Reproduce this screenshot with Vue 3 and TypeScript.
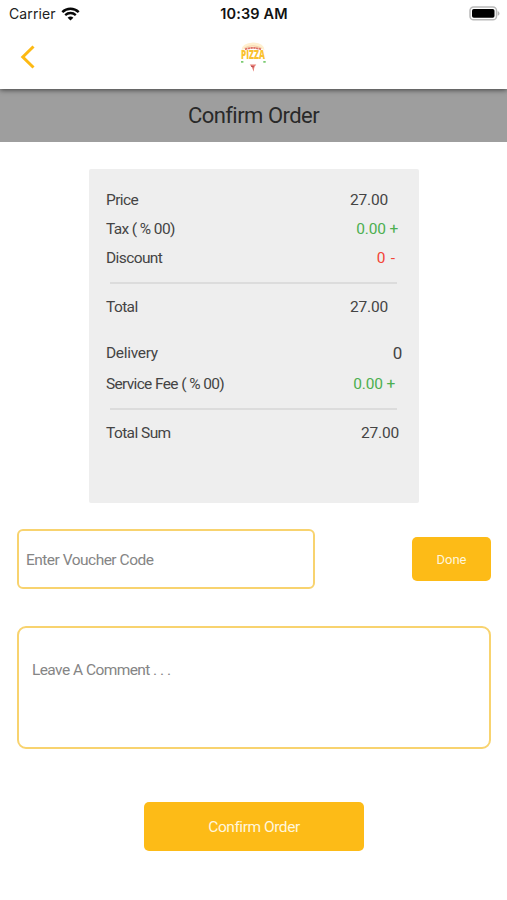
<script setup lang="ts">
interface Line {
  key: string
  label: string
  value: string
  tone?: 'plus' | 'minus'
}

const subtotal: Line[] = [
  { key: 'price', label: 'Price', value: '27.00' },
  { key: 'tax', label: 'Tax ( % 00)', value: '0.00 +', tone: 'plus' },
  { key: 'discount', label: 'Discount', value: '0 -', tone: 'minus' },
]
const fees: Line[] = [
  { key: 'total', label: 'Total', value: '27.00' },
  { key: 'delivery', label: 'Delivery', value: '0' },
  { key: 'service', label: 'Service Fee ( % 00)', value: '0.00 +', tone: 'plus' },
]
const sum: Line[] = [{ key: 'sum', label: 'Total Sum', value: '27.00' }]
const groups: Line[][] = [subtotal, fees, sum]
</script>

<template>
  <main class="screen">
    <header class="top">
      <div class="status">
        <div class="carrier">
          <span>Carrier</span>
          <svg class="wifi" width="19" height="14" viewBox="0 0 19 14">
            <path d="M1.3 5.1C6 .6 13 .6 17.7 5.1" fill="none" stroke="#080808" stroke-width="2.5" />
            <path d="M4.2 8.1c3-2.8 7.6-2.8 10.6 0" fill="none" stroke="#080808" stroke-width="2.3" />
            <path d="M6.6 10.7c1.7-1.6 4.1-1.6 5.8 0L9.5 13.6z" fill="#080808" />
          </svg>
        </div>
        <span class="time">10:39 AM</span>
        <svg class="battery" width="31" height="15" viewBox="0 0 31 15">
          <rect x="1" y="1" width="26.5" height="12.8" rx="3.6" fill="#fff" stroke="#b9b9b9" stroke-width="1.5" />
          <rect x="3" y="3" width="22.5" height="8.8" rx="1.8" fill="#000" />
          <path d="M28.7 5v4.8q1.8-.7 1.8-2.4T28.7 5z" fill="#b5b5b5" />
        </svg>
      </div>
      <nav class="nav">
        <svg class="back" width="16" height="26" viewBox="0 0 16 26">
          <path d="M14.500 2.500 3.800 13 14.500 23.500" fill="none" stroke="#fdb913" stroke-width="3" />
        </svg>
        <svg class="logo" width="36" height="34" viewBox="-4 0 36 34">
          <path d="M2.500 10Q3 3 14 2.500 25 3 25.500 10 14 5 2.500 10z" fill="#fff0d0" />
          <path d="M5.500 8Q14 3.500 22.500 8" fill="none" stroke="#f6d5ae" stroke-width="1.2" />
          <path d="M6 9.300Q14 6.400 22 9.300" fill="none" stroke="#df7468" stroke-width="1.800" stroke-dasharray="2.4 .4" />
          <text x="2" y="19.200" textLength="24" lengthAdjust="spacingAndGlyphs" class="logo-word">PIZZA</text>
          <path d="M2 21.800h2.400M24.300 21.800h2.400" stroke="#7bcb72" stroke-width="1.800" />
          <path d="M10.700 24.400h6.600l-2 2.600-.6 4.800-1.800-4.600z" fill="#e78078" />
          <path d="m12 26.200 3.200.8" stroke="#b94a50" stroke-width="1" />
        </svg>
      </nav>
    </header>

    <h1 class="title"><span>Confirm Order</span></h1>

    <section class="card">
      <div v-for="(group, i) in groups" :key="i" class="group">
        <div v-for="line in group" :key="line.key" :class="['row', line.key]">
          <span class="label">{{ line.label }}</span>
          <span :class="['value', line.tone]">{{ line.value }}</span>
        </div>
      </div>
    </section>

    <section class="voucher">
      <div class="field"><span>Enter Voucher Code</span></div>
      <button class="done" type="button">Done</button>
    </section>

    <div class="comment"><span>Leave A Comment . . .</span></div>

    <button class="confirm" type="button"><span>Confirm Order</span></button>
  </main>
</template>

<style>
body {
  background: #fff;
}
</style>

<style scoped>
.screen {
  box-sizing: border-box;
  width: 507px;
  height: 900px;
  display: flex;
  flex-direction: column;
  overflow: hidden;
  background: #fff;
  color: #444;
  font-family: Roboto, 'Noto Sans', sans-serif;
  font-size: 15.5px;
  letter-spacing: -0.6px;
  word-spacing: 0.2px;
}
.top {
  position: relative;
  height: 89px;
  flex: none;
  background: #fff;
  box-shadow: 0 1px 5px rgba(0, 0, 0, 0.6);
  letter-spacing: 0;
  word-spacing: 0;
}
.status {
  display: grid;
  grid-template-columns: 1fr auto 1fr;
  align-items: center;
  height: 27px;
  padding: 0 7px 0 9px;
  font-family: Inter, sans-serif;
  font-size: 14px;
  color: #222;
}
.carrier {
  display: flex;
  align-items: center;
  gap: 5px;
  letter-spacing: 0.1px;
}
.time {
  margin-right: 1px;
  font-size: 14.5px;
  font-weight: 600;
  letter-spacing: 0.15px;
  color: #111;
}
.battery {
  justify-self: end;
}
.nav {
  display: grid;
  grid-template-columns: 1fr auto 1fr;
  align-items: center;
  height: 60px;
  padding: 0 20px 0 19px;
}
.logo {
  overflow: visible;
}
.logo-word {
  font: 800 12px 'Open Sans', sans-serif;
  fill: #fac22e;
}
.title {
  display: flex;
  align-items: center;
  justify-content: center;
  height: 53px;
  flex: none;
  margin: 0;
  background: #9e9e9e;
  color: #292929;
  font-size: 22px;
  font-weight: 400;
  letter-spacing: -0.55px;
}
.card {
  box-sizing: border-box;
  width: 330px;
  height: 334px;
  flex: none;
  margin: 27px 0 0 89px;
  padding: 16px 17px 0;
  background: #eee;
  border-radius: 2px;
}
.group + .group {
  margin-top: 9px;
}
.group + .group::before {
  content: '';
  display: block;
  height: 2px;
  margin: 0 5px 8px 4px;
  background: #dcdcdc;
}
.row {
  display: flex;
  align-items: center;
  justify-content: space-between;
  height: 29.3px;
}
.delivery {
  margin-top: 17.5px;
}
.service {
  height: 31.5px;
}
.tax .label,
.service .label {
  letter-spacing: -0.68px;
}
.delivery .label {
  letter-spacing: -0.3px;
}
.value {
  letter-spacing: -0.2px;
  word-spacing: 0;
}
.price .value,
.total .value {
  margin-right: 14px;
}
.tax .value {
  margin-right: 4px;
}
.discount .value {
  margin-right: 7px;
  letter-spacing: 0;
  word-spacing: 1.5px;
}
.delivery .value {
  font-size: 17px;
}
.service .value {
  margin-right: 7px;
}
.sum .value {
  margin-right: 3px;
}
.plus {
  color: #4caf50;
}
.minus {
  color: #f44336;
}
.voucher {
  display: flex;
  align-items: center;
  justify-content: space-between;
  height: 60px;
  flex: none;
  margin: 26px 16px 0 17px;
}
.field,
.comment {
  box-sizing: border-box;
  border: 2px solid #f8d36f;
  color: #858585;
}
.field {
  display: flex;
  align-items: center;
  width: 298px;
  height: 60px;
  padding: 2px 0 0 7px;
  border-radius: 6px;
  letter-spacing: -0.53px;
}
button {
  border: 0;
  padding: 0;
  background: #fdbb17;
  color: #fff6dc;
  font-family: inherit;
}
.done {
  width: 79px;
  height: 44px;
  border-radius: 5px;
  font-size: 13px;
}
.comment {
  height: 123px;
  flex: none;
  margin: 37px 16px 0 17px;
  padding: 33px 13px;
  border-radius: 9px;
}
.confirm {
  width: 220px;
  height: 49px;
  flex: none;
  margin: 53px 0 0 144px;
  border-radius: 5px;
  font-size: 15.5px;
  letter-spacing: -0.45px;
}
</style>
